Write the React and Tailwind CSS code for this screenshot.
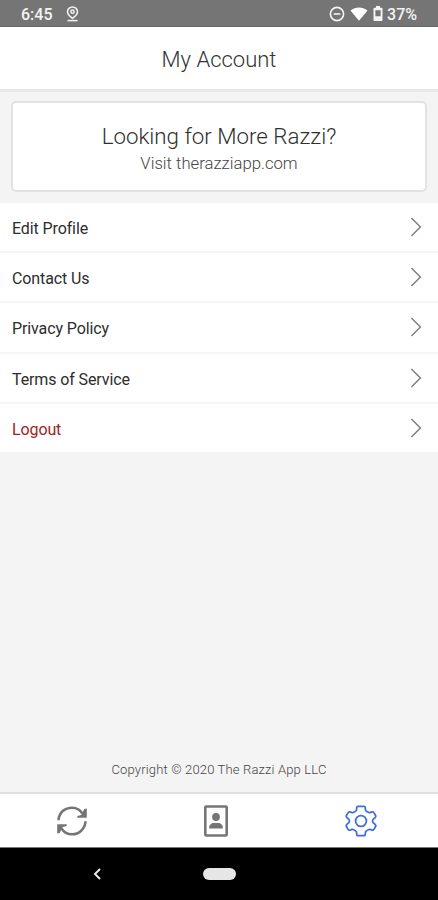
import clsx from "clsx";

const menuItems = [
  { label: "Edit Profile" },
  { label: "Contact Us" },
  { label: "Privacy Policy" },
  { label: "Terms of Service" },
  { label: "Logout", danger: true },
];

function StatusBar() {
  return (
    <div className="h-[27px] shrink-0 bg-[#757575] border-b border-[#686868] flex items-center text-[#f4f4f4] pl-[21px] pr-[21px]">
      <span className="text-[16px] leading-[27px] font-medium pt-[3px]">6:45</span>
      <svg className="ml-[13px] mt-[2px] w-[13px] h-4" viewBox="0 0 13 16" fill="none" stroke="currentColor" strokeWidth="1.5">
        <path d="M6.5 12.4C4 10.3 1.5 8.6 1.5 5.9a5 5 0 0 1 10 0C11.5 8.6 9 10.3 6.5 12.4z" />
        <circle cx="6.5" cy="5.7" r="1.6" />
        <path d="M1.5 14.6h10" />
      </svg>
      <div className="ml-auto flex items-center">
        <svg className="mt-px w-4 h-4" viewBox="0 0 16 16" fill="none" stroke="currentColor" strokeWidth="1.6">
          <circle cx="8" cy="8" r="6.6" />
          <path d="M4.7 8h6.6" />
        </svg>
        <svg className="ml-[5px] mt-px w-[18px] h-[14px]" viewBox="0 0 18 14" fill="#fff">
          <path d="M0.5 3.5C5.5-.6 12.5-.6 17.5 3.5L9 13.8z" />
        </svg>
        <svg className="ml-[5px] mt-px w-[10px] h-[15px]" viewBox="0 0 10 15" fill="currentColor">
          <path fillRule="evenodd" d="M3 0h4v1.8h1.5q1 0 1 1V14q0 1-1 1h-7q-1 0-1-1V2.8q0-1 1-1H3zM2.4 4.2v6h5.2v-6z" />
        </svg>
        <span className="ml-1 text-[16px] leading-[27px] font-medium pt-[3px]">37%</span>
      </div>
    </div>
  );
}

function MenuRow({ item, last }) {
  return (
    <div
      className={clsx(
        "flex items-center justify-between pl-3 pr-4",
        last ? "h-[48.4px]" : "h-[50.2px] border-b-2 border-[#f6f6f6]"
      )}
    >
      <span
        className={clsx(
          "text-[16px] leading-5 pt-[4px] tracking-[-0.11px]",
          item.danger ? "text-[#a02226]" : "text-[#2d2d2d]"
        )}
      >
        {item.label}
      </span>
      <svg className="w-3 h-5" viewBox="0 0 12 20" fill="none" stroke="#808080" strokeWidth="1.5">
        <path d="M1.4 1l9 9-9 9" />
      </svg>
    </div>
  );
}

function SyncIcon() {
  return (
    <svg className="w-8 h-8" viewBox="0 0 32 32" fill="none" stroke="#757575" strokeWidth="2.6">
      <path d="M2.5 15.2C2.9 7.5 9 2.7 16 2.7c4.7 0 8.3 2.2 10.5 6" />
      <path d="M29.5 16.3C29.1 24 23 29.3 16 29.3c-4.7 0-8.3-2.2-10.5-6" />
      <path d="M30.8 3.5v9.3h-9.5v-1.9l4-.9 3-6.1z" fill="#757575" stroke="none" />
      <path d="M1.2 28.5v-9.3h9.5v1.9l-4 .9-3 6.1z" fill="#757575" stroke="none" />
    </svg>
  );
}

function ContactIcon() {
  return (
    <svg className="w-[26px] h-8" viewBox="0 0 26 32" fill="#757575">
      <rect x="2.3" y="1.5" width="21.4" height="29" rx="1" fill="none" stroke="#757575" strokeWidth="2.6" />
      <circle cx="13" cy="12" r="3.9" />
      <path d="M6.2 23.5v-1.3c0-2.2 2.2-4.2 4.6-4.2h4.4c2.4 0 4.6 2 4.6 4.2v1.3z" />
    </svg>
  );
}

function GearIcon() {
  return (
    <svg className="w-8 h-8" viewBox="-49 -48 98 96" fill="none" stroke="#3f6fd6" strokeWidth="5.4" strokeLinejoin="round">
      <path d="M-9-45H9Q13-45 13-41L14-33Q15-30 24-26Q27-24 34-28Q38-29 40-25L45-16Q46-13 43-10L37-5Q34 0 37 5L43 10Q46 13 45 16L40 25Q38 29 34 28Q27 24 24 26Q15 30 14 33L13 41Q13 45 9 45H-9Q-13 45-13 41L-14 33Q-15 30-24 26Q-27 24-34 28Q-38 29-40 25L-45 16Q-46 13-43 10L-37 5Q-34 0-37-5L-43-10Q-46-13-45-16L-40-25Q-38-29-34-28Q-27-24-24-26Q-15-30-14-33L-13-41Q-13-45-9-45z" />
      <circle r="16.5" />
    </svg>
  );
}

export default function App() {
  return (
    <div className="h-[900px] w-[438px] overflow-hidden flex flex-col bg-[#f4f4f4] font-['Roboto',sans-serif]">
      <StatusBar />
      <header className="h-[65px] shrink-0 bg-white border-b-3 border-[#e8e8e8] text-center">
        <h1 className="text-[22px] leading-[66px] font-light text-[#333]">My Account</h1>
      </header>

      <section className="mx-[11px] mt-[9px] h-[91px] shrink-0 bg-white border-2 border-[#e2e2e2] rounded-[5px] flex flex-col items-center pt-[19px] font-light">
        <h2 className="text-[22.3px] leading-7 text-[#303030]">Looking for More Razzi?</h2>
        <p className="mt-px text-[16.7px] leading-[25px] text-[#444]">Visit therazziapp.com</p>
      </section>

      <nav className="mt-[11px] bg-white shrink-0">
        {menuItems.map((item, i) => (
          <MenuRow key={item.label} item={item} last={i === menuItems.length - 1} />
        ))}
      </nav>

      <p className="mt-auto mb-[12px] text-center text-[13px] leading-5 font-light tracking-[0.16px] text-[#444]">
        Copyright © 2020 The Razzi App LLC
      </p>

      <div className="h-[55px] shrink-0 bg-white border-t-2 border-[#e0e0e0] grid grid-cols-3 items-center justify-items-center pt-px pr-[5px]">
        <SyncIcon />
        <ContactIcon />
        <GearIcon />
      </div>

      <div className="h-[53px] shrink-0 bg-black border-t border-[#777] flex items-center">
        <svg className="ml-[93px] w-2 h-3" viewBox="0 0 8 12" fill="none" stroke="#e8e8e8" strokeWidth="2">
          <path d="M7 1L2 6l5 5" />
        </svg>
        <div className="ml-[102px] w-[33px] h-3 rounded-full bg-[#e6e6e6]" />
      </div>
    </div>
  );
}
